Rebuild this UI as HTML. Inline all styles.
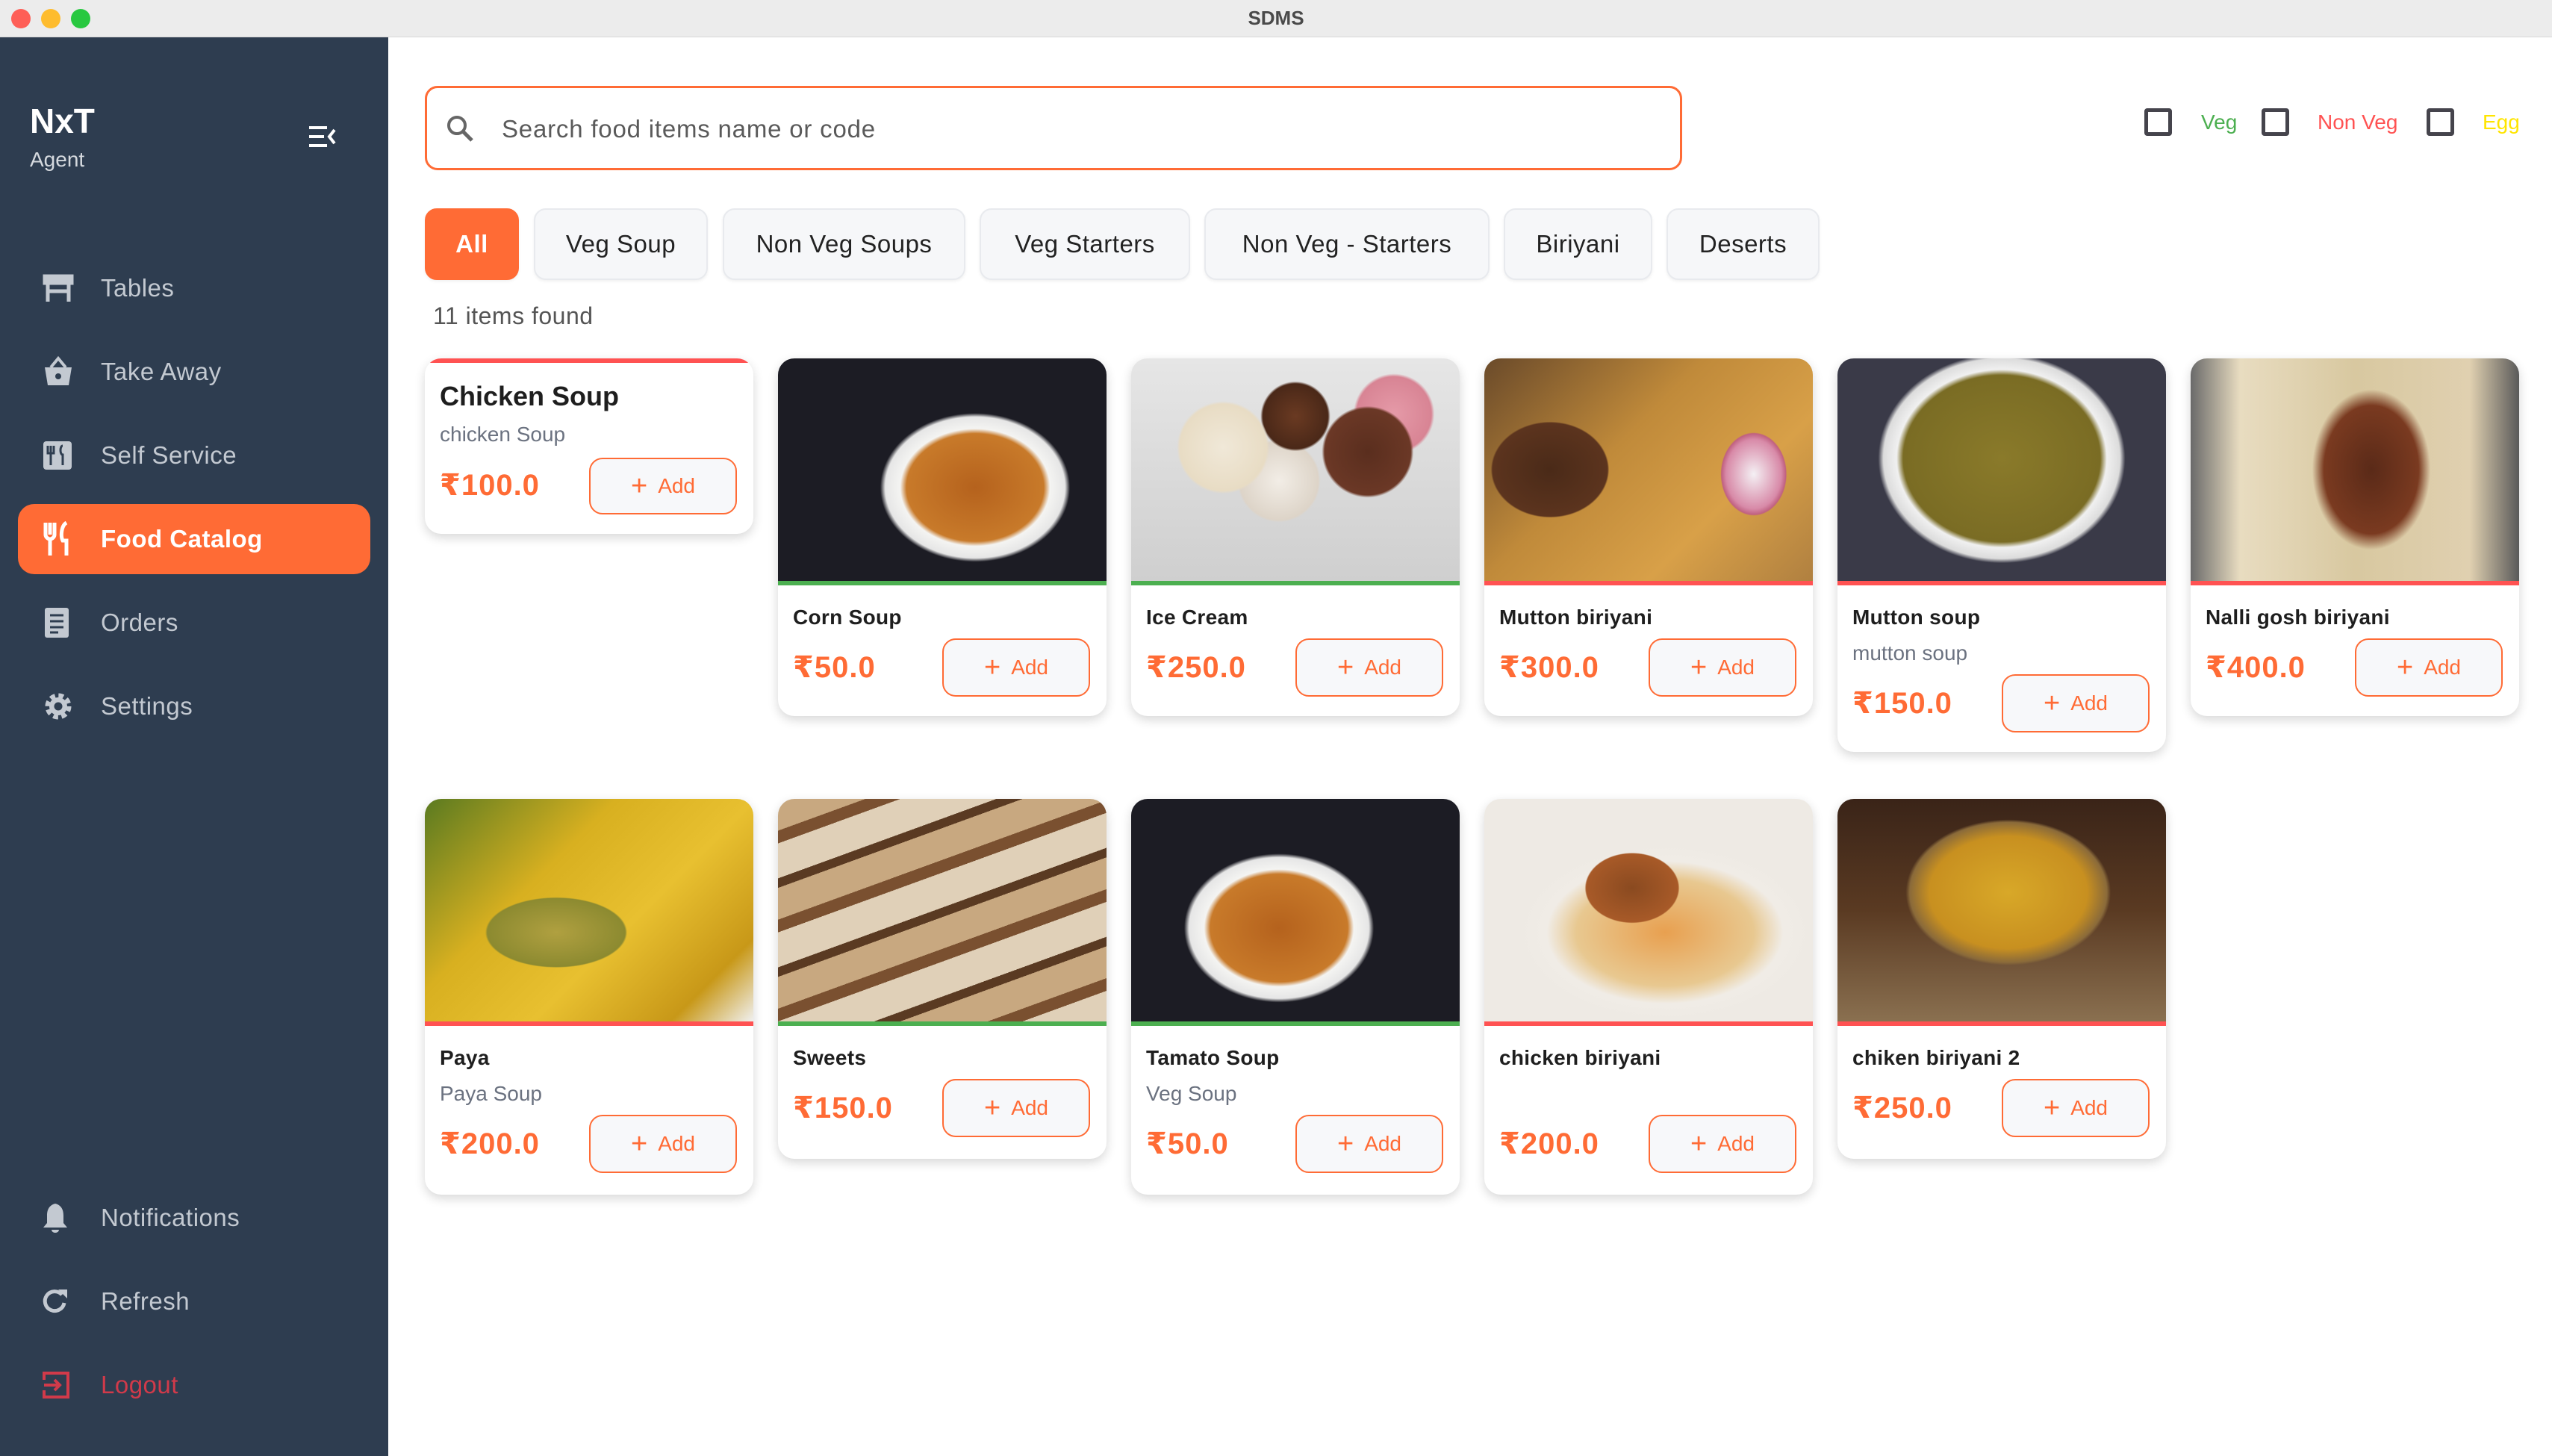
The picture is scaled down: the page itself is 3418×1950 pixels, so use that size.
<!DOCTYPE html>
<html><head><meta charset="utf-8"><style>
*{box-sizing:border-box;margin:0;padding:0}
body{width:3418px;height:1950px;position:relative;overflow:hidden;background:#fff;font-family:"Liberation Sans","DejaVu Sans",sans-serif}
.abs{position:absolute}
#tb{left:0;top:0;width:3418px;height:50px;background:#ececec;border-bottom:1px solid #d6d6d6}
.tl{position:absolute;top:12px;width:26px;height:26px;border-radius:50%}
#side{left:0;top:50px;width:520px;height:1900px;background:#2e3d50}
.ni{position:absolute;left:0;width:520px;height:92px;color:#c3c9d1;font-size:33px;letter-spacing:0.5px}
.ni span{position:absolute;left:135px;top:50%;transform:translateY(-50%)}
.ni svg{position:absolute;left:56px;top:50%;transform:translateY(-50%)}
.chip{position:absolute;top:279px;height:96px;background:#f6f7f9;border:2px solid #e8eaee;border-radius:16px;font-size:33px;color:#222;display:flex;align-items:center;justify-content:center;letter-spacing:0.5px;box-shadow:0 2px 4px rgba(0,0,0,.06)}
.card{position:absolute;width:440px;background:#fff;border-radius:22px;box-shadow:0 5px 14px rgba(0,0,0,.16);overflow:hidden}
.img{position:absolute;left:0;top:0;width:440px;height:298px}
.ln{position:absolute;left:0;top:298px;width:440px;height:6px}
.nm{position:absolute;left:20px;font-size:28px;font-weight:bold;color:#1e1e1e;line-height:34px;letter-spacing:0.3px}
.ds{position:absolute;left:20px;font-size:28px;color:#6b7280;line-height:34px}
.pr{position:absolute;left:20px;font-size:40px;font-weight:bold;color:#ff6b35;line-height:48px;letter-spacing:1px}
.btn{position:absolute;left:220px;width:198px;height:78px;border:2px solid #ff6b35;border-radius:18px;background:#f7f8fa;color:#ff6b35;font-size:28px;display:flex;align-items:center;justify-content:center}
.btn b{font-weight:normal;font-size:38px;margin-right:14px;line-height:1}
.g{background:#4caf50}.r{background:#ff5252}
.cb{position:absolute;top:145px;width:37px;height:37px;border:5px solid #45444c;border-radius:4px}
.ft{position:absolute;top:148px;font-size:28px}
</style></head><body>
<div id="tb" class="abs">
<div class="tl" style="left:15px;background:#fe5f57"></div>
<div class="tl" style="left:55px;background:#febc2e"></div>
<div class="tl" style="left:95px;background:#28c840"></div>
<div class="abs" style="left:0;width:3418px;top:9px;text-align:center;font-size:26px;font-weight:bold;color:#4a4a4a">SDMS</div>
</div>
<div id="side" class="abs">
<div class="abs" style="left:40px;top:85px;font-size:46px;font-weight:bold;color:#fff">NxT</div>
<div class="abs" style="left:40px;top:148px;font-size:28px;color:#d5d9de">Agent</div>
<svg class="abs" style="left:412px;top:116px" width="40" height="34" viewBox="0 0 40 34"><g stroke="#fff" stroke-width="4" fill="none"><path d="M2 5H26M2 17H22M2 29H26M36 8L29 17L36 26"/></g></svg>
<div class="ni" style="top:290px"><svg width="44" height="40" viewBox="0 0 44 40"><path d="M4 4H40V13H4Z M8 13V38 M36 13V38 M8 24H36" stroke="#c3c9d1" stroke-width="5" fill="none"/><rect x="4" y="4" width="36" height="9" fill="#c3c9d1"/></svg><span>Tables</span></div>
<div class="ni" style="top:402px"><svg width="44" height="44" viewBox="0 0 44 44"><path d="M4 16H40L36 40H8Z" fill="#c3c9d1"/><path d="M12 16L22 4L32 16" stroke="#c3c9d1" stroke-width="4" fill="none"/><circle cx="22" cy="28" r="4" fill="#2e3d50"/></svg><span>Take Away</span></div>
<div class="ni" style="top:514px"><svg width="42" height="42" viewBox="0 0 42 42"><rect x="2" y="2" width="38" height="38" rx="4" fill="#c3c9d1"/><path d="M12 8V34M8 8V18H16V8M28 8C24 8 24 20 28 20V34" stroke="#2e3d50" stroke-width="3" fill="none"/></svg><span>Self Service</span></div>
<div class="abs" style="left:24px;top:625px;width:472px;height:94px;background:#ff6b35;border-radius:22px"></div>
<div class="ni" style="top:626px;color:#fff;font-weight:bold"><svg width="40" height="48" viewBox="0 0 40 48"><path d="M5 2V18C5 22 9 24 11 24V46M11 2V18M17 2V18C17 22 13 24 11 24M33 2C26 6 25 20 28 26H33V46" stroke="#fff" stroke-width="5" fill="none"/></svg><span>Food Catalog</span></div>
<div class="ni" style="top:738px"><svg width="40" height="44" viewBox="0 0 40 44"><rect x="4" y="2" width="32" height="40" rx="3" fill="#c3c9d1"/><path d="M11 12H29M11 20H29M11 28H29M11 35H22" stroke="#2e3d50" stroke-width="3"/></svg><span>Orders</span></div>
<div class="ni" style="top:850px"><svg width="44" height="44" viewBox="0 0 44 44"><circle cx="22" cy="22" r="13" fill="none" stroke="#c3c9d1" stroke-width="9" stroke-dasharray="6 4.2"/><circle cx="22" cy="22" r="12" fill="#c3c9d1"/><circle cx="22" cy="22" r="5.5" fill="#2e3d50"/></svg><span>Settings</span></div>
<div class="ni" style="top:1535px"><svg width="36" height="42" viewBox="0 0 36 42"><path d="M18 2C10 4 7 10 7 18V28L2 34H34L29 28V18C29 10 26 4 18 2Z" fill="#c3c9d1"/><path d="M13 37A5 4 0 0 0 23 37Z" fill="#c3c9d1"/></svg><span>Notifications</span></div>
<div class="ni" style="top:1647px"><svg width="36" height="36" viewBox="0 0 36 36"><path d="M30 20A13 13 0 1 1 27 9" stroke="#c3c9d1" stroke-width="5" fill="none"/><path d="M22 2L34 2L34 14Z" fill="#c3c9d1"/></svg><span>Refresh</span></div>
<div class="ni" style="top:1759px;color:#d13a4a"><svg width="38" height="38" viewBox="0 0 38 38"><path d="M3 12V3H35V35H3V26" stroke="#d13a4a" stroke-width="4" fill="none"/><path d="M3 19H24M17 12L24 19L17 26" stroke="#d13a4a" stroke-width="4" fill="none"/></svg><span>Logout</span></div>
</div>

<div class="abs" style="left:569px;top:115px;width:1684px;height:113px;border:3px solid #ff6b35;border-radius:17px"></div>
<svg class="abs" style="left:597px;top:153px" width="38" height="38" viewBox="0 0 38 38"><circle cx="15" cy="15" r="11" stroke="#666" stroke-width="4" fill="none"/><path d="M23 23L35 35" stroke="#666" stroke-width="5"/></svg>
<div class="abs" style="left:672px;top:154px;font-size:33px;color:#5a5a5a;letter-spacing:0.8px">Search food items name or code</div>

<div class="cb" style="left:2872px"></div><div class="ft" style="left:2948px;color:#4caf50">Veg</div>
<div class="cb" style="left:3029px"></div><div class="ft" style="left:3104px;color:#ff5252">Non Veg</div>
<div class="cb" style="left:3250px"></div><div class="ft" style="left:3325px;color:#ffe500">Egg</div>

<div class="chip" style="left:569px;width:126px;background:#ff6b35;border-color:#ff6b35;color:#fff;font-weight:bold">All</div>
<div class="chip" style="left:715px;width:233px">Veg Soup</div>
<div class="chip" style="left:968px;width:325px">Non Veg Soups</div>
<div class="chip" style="left:1312px;width:282px">Veg Starters</div>
<div class="chip" style="left:1613px;width:382px">Non Veg - Starters</div>
<div class="chip" style="left:2014px;width:199px">Biriyani</div>
<div class="chip" style="left:2232px;width:205px">Deserts</div>
<div class="abs" style="left:580px;top:405px;font-size:32px;color:#555;letter-spacing:0.5px">11 items found</div>

<!-- Chicken soup -->
<div class="card" style="left:569px;top:480px;height:235px">
<div class="abs r" style="left:0;top:0;width:440px;height:6px"></div>
<div class="abs" style="left:20px;top:30px;font-size:36px;font-weight:bold;color:#1e1e1e">Chicken Soup</div>
<div class="ds" style="top:85px">chicken Soup</div>
<div class="pr" style="top:146px">₹100.0</div>
<div class="btn" style="top:133px;height:76px"><b>+</b>Add</div>
</div>

<!-- Row 1 -->
<div class="card" style="left:1042px;top:480px;height:479px">
<div class="img" style="background:radial-gradient(ellipse 38% 44% at 60% 58%,#b5621d 0,#c87a2a 55%,#f4f4f2 60%,#e6e6e6 72%,#1c1c24 76%)"></div>
<div class="ln g"></div><div class="nm" style="top:330px">Corn Soup</div>
<div class="pr" style="top:390px">₹50.0</div><div class="btn" style="top:375px"><b>+</b>Add</div></div>

<div class="card" style="left:1515px;top:480px;height:479px">
<div class="img" style="background:radial-gradient(circle at 28% 40%,#f0e8d8 0,#e8dcc4 16%,transparent 17%),radial-gradient(circle at 50% 26%,#6a3a22 0,#4a2818 14%,transparent 15%),radial-gradient(circle at 72% 42%,#5a2e1e 0,#6b3826 16%,transparent 17%),radial-gradient(circle at 45% 55%,#f2ede6 0,#ddd4c8 18%,transparent 19%),radial-gradient(circle at 80% 25%,#e59aa8 0,#d88494 12%,transparent 13%),linear-gradient(#e6e6e6,#cfcfcf)"></div>
<div class="ln g"></div><div class="nm" style="top:330px">Ice Cream</div>
<div class="pr" style="top:390px">₹250.0</div><div class="btn" style="top:375px"><b>+</b>Add</div></div>

<div class="card" style="left:1988px;top:480px;height:479px">
<div class="img" style="background:radial-gradient(ellipse 14% 26% at 82% 52%,#f4f0f4 0,#d88aa8 60%,#c06080 70%,transparent 72%),radial-gradient(ellipse 25% 30% at 20% 50%,#4a2a18 0,#5c341e 70%,transparent 72%),linear-gradient(135deg,#6a4a2a,#c08a3a 40%,#d8a048 70%,#b08040)"></div>
<div class="ln r"></div><div class="nm" style="top:330px">Mutton biriyani</div>
<div class="pr" style="top:390px">₹300.0</div><div class="btn" style="top:375px"><b>+</b>Add</div></div>

<div class="card" style="left:2461px;top:480px;height:527px">
<div class="img" style="background:radial-gradient(ellipse 40% 50% at 50% 45%,#8a7a2a 0,#7a6c24 75%,#f0f0f0 80%,#dcdcdc 90%,#3a3a48 94%)"></div>
<div class="ln r"></div><div class="nm" style="top:330px">Mutton soup</div>
<div class="ds" style="top:378px">mutton soup</div>
<div class="pr" style="top:438px">₹150.0</div><div class="btn" style="top:423px"><b>+</b>Add</div></div>

<div class="card" style="left:2934px;top:480px;height:479px">
<div class="img" style="background:radial-gradient(ellipse 24% 48% at 55% 50%,#5a2a18 0,#7a3a20 60%,transparent 75%),linear-gradient(90deg,#6a6a6a,#e8dcc0 15%,#d8c8a0 50%,#e0d0b0 85%,#5a5a5a)"></div>
<div class="ln r"></div><div class="nm" style="top:330px">Nalli gosh biriyani</div>
<div class="pr" style="top:390px">₹400.0</div><div class="btn" style="top:375px"><b>+</b>Add</div></div>

<!-- Row 2 -->
<div class="card" style="left:569px;top:1070px;height:530px">
<div class="img" style="background:radial-gradient(ellipse 30% 22% at 40% 60%,#b0a040 0,#8c8a30 70%,transparent 72%),linear-gradient(135deg,#5a7a20,#d8b020 35%,#e8c030 60%,#c89818 85%,#f0f0f0)"></div>
<div class="ln r"></div><div class="nm" style="top:330px">Paya</div>
<div class="ds" style="top:378px">Paya Soup</div>
<div class="pr" style="top:438px">₹200.0</div><div class="btn" style="top:423px"><b>+</b>Add</div></div>

<div class="card" style="left:1042px;top:1070px;height:482px">
<div class="img" style="background:repeating-linear-gradient(160deg,#c8a880 0 40px,#7a5030 40px 56px,#e0d0b8 56px 100px,#5a3a22 100px 112px)"></div>
<div class="ln g"></div><div class="nm" style="top:330px">Sweets</div>
<div class="pr" style="top:390px">₹150.0</div><div class="btn" style="top:375px"><b>+</b>Add</div></div>

<div class="card" style="left:1515px;top:1070px;height:530px">
<div class="img" style="background:radial-gradient(ellipse 38% 44% at 45% 58%,#b5621d 0,#c87a2a 55%,#f4f4f2 60%,#e6e6e6 72%,#1c1c24 76%)"></div>
<div class="ln g"></div><div class="nm" style="top:330px">Tamato Soup</div>
<div class="ds" style="top:378px">Veg Soup</div>
<div class="pr" style="top:438px">₹50.0</div><div class="btn" style="top:423px"><b>+</b>Add</div></div>

<div class="card" style="left:1988px;top:1070px;height:530px">
<div class="img" style="background:radial-gradient(ellipse 20% 22% at 45% 40%,#8a4a20 0,#a85a28 70%,transparent 72%),radial-gradient(ellipse 45% 40% at 55% 60%,#e8a050 0,#e8c890 60%,#f0ece6 80%,#eeeae4 100%)"></div>
<div class="ln r"></div><div class="nm" style="top:330px">chicken biriyani</div>
<div class="pr" style="top:438px">₹200.0</div><div class="btn" style="top:423px"><b>+</b>Add</div></div>

<div class="card" style="left:2461px;top:1070px;height:482px">
<div class="img" style="background:radial-gradient(ellipse 40% 42% at 52% 42%,#d8a828 0,#c89020 60%,#8a6a3a 75%,transparent 78%),linear-gradient(#3a2418,#5a3a22 50%,#8a7050)"></div>
<div class="ln r"></div><div class="nm" style="top:330px">chiken biriyani 2</div>
<div class="pr" style="top:390px">₹250.0</div><div class="btn" style="top:375px"><b>+</b>Add</div></div>
</body></html>
